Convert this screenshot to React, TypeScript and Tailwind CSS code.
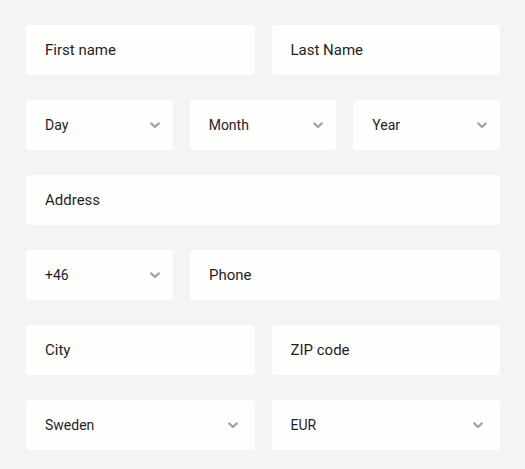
const Chevron = () => (
  <svg width="10" height="7" viewBox="0 0 10 7" className="shrink-0">
    <path d="M1.2 1.4 L5 5 L8.8 1.4" fill="none" stroke="#9ea3aa" strokeWidth="2.2" strokeLinecap="round" strokeLinejoin="round" />
  </svg>
);

const Field = ({ label, className = "" }: { label: string; className?: string }) => (
  <div className={`h-[50px] bg-[#fefefd] rounded-[3px] flex items-center pl-[19px] text-[15px] text-[#1f1f1f] ${className}`}>
    {label}
  </div>
);

const Select = ({ label, className = "" }: { label: string; className?: string }) => (
  <div className={`h-[50px] bg-[#fefefd] rounded-[3px] flex items-center justify-between pl-[19px] pr-[13px] text-[14px] text-[#1f1f1f] ${className}`}>
    <span>{label}</span>
    <Chevron />
  </div>
);

export default function App() {
  return (
    <div className="w-[525px] h-[469px] bg-[#f4f4f4] pt-[25px] pl-[26px] pr-[25px]" style={{ fontFamily: "Roboto, 'Liberation Sans', sans-serif" }}>
      <div className="flex flex-col gap-[25px]">
        <div className="grid grid-cols-2 gap-[17px]">
          <Field label="First name" />
          <Field label="Last Name" />
        </div>
        <div className="grid grid-cols-3 gap-[17px]">
          <Select label="Day" />
          <Select label="Month" />
          <Select label="Year" />
        </div>
        <Field label="Address" />
        <div className="flex gap-[17px]">
          <Select label="+46" className="w-[147px]" />
          <Field label="Phone" className="flex-1" />
        </div>
        <div className="grid grid-cols-2 gap-[17px]">
          <Field label="City" />
          <Field label="ZIP code" />
        </div>
        <div className="grid grid-cols-2 gap-[17px]">
          <Select label="Sweden" className="pr-[17px]" />
          <Select label="EUR" className="pr-[17px]" />
        </div>
      </div>
    </div>
  );
}
